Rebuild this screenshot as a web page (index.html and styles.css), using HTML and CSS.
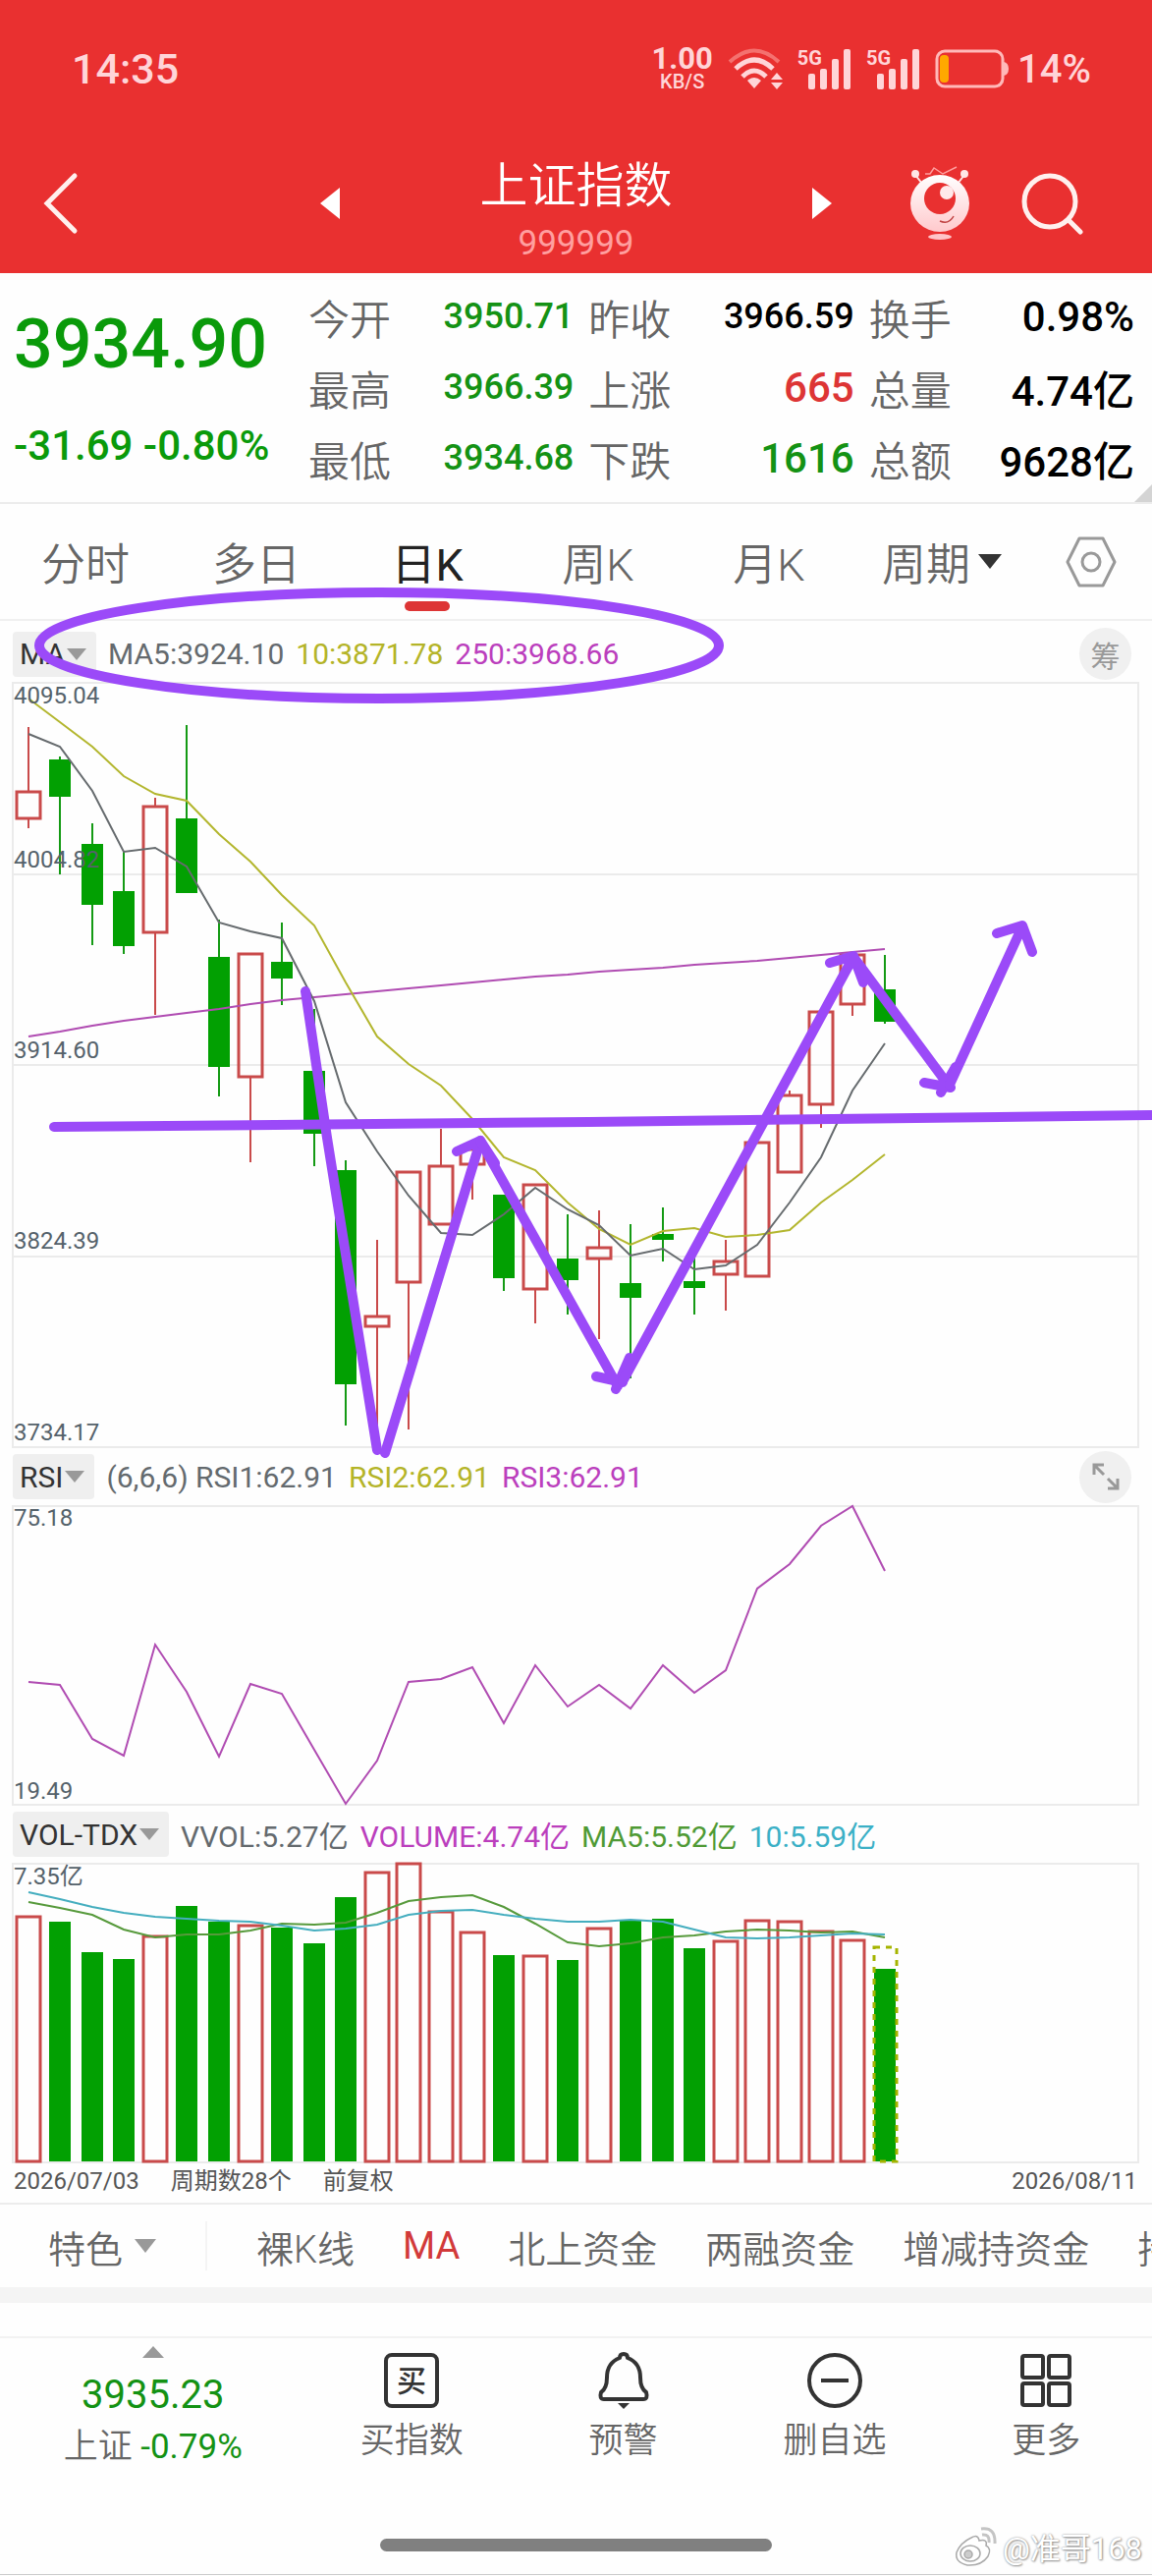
FILE: index.html
```
<!DOCTYPE html>
<html lang="zh-CN">
<head>
    <meta charset="UTF-8">
    <meta name="viewport" content="width=device-width, initial-scale=1.0">
    <title>上证指数 999999</title>
    <link rel="stylesheet" href="styles.css">
</head>
<body>

    <!-- Header -->
    <header class="header">
        <div class="status-bar">
            <span class="clock">14:35</span>
            <div class="status-icons">
                <div class="net-speed"><b>1.00</b><span>KB/S</span></div>
                <svg class="wifi" width="56" height="42" viewBox="0 0 56 42" fill="none" stroke="#ffd5d8" stroke-width="5">
                    <path d="M2 14 Q27 -9 52 14" stroke="#f4716f" stroke-width="4"/>
                    <path d="M8 21 Q27 3 46 21"/>
                    <path d="M15 29 Q27 17 39 29"/>
                    <path d="M20 33 Q27 27 34 33 L27 41 Z" fill="#ffd5d8" stroke="none"/>
                    <path d="M44 32 l6 -7 l6 7 Z M44 35 l6 7 l6 -7 Z" fill="#ffd5d8" stroke="none"/>
                </svg>
                <div class="signal">
                    <span>5G</span>
                    <svg width="44" height="42" viewBox="0 0 44 42" fill="#ffd5d8"><rect x="0" y="26" width="7" height="16" rx="2"/><rect x="12" y="21" width="7" height="21" rx="2"/><rect x="24" y="11" width="7" height="31" rx="2"/><rect x="36" y="1" width="7" height="41" rx="2"/></svg>
                </div>
                <div class="signal">
                    <span>5G</span>
                    <svg width="44" height="42" viewBox="0 0 44 42" fill="#ffd5d8"><rect x="0" y="26" width="7" height="16" rx="2"/><rect x="12" y="21" width="7" height="21" rx="2"/><rect x="24" y="11" width="7" height="31" rx="2"/><rect x="36" y="1" width="7" height="41" rx="2"/></svg>
                </div>
                <svg class="battery" width="75" height="40" viewBox="0 0 75 40">
                    <rect x="2" y="2" width="67" height="36" rx="8" fill="none" stroke="#ffb9b9" stroke-width="3"/>
                    <path d="M70 13 q5 1 5 7 q0 6 -5 7 Z" fill="#ffb9b9"/>
                    <rect x="5" y="6" width="9" height="28" rx="4" fill="#ffa800"/>
                </svg>
                <span class="battery-level">14%</span>
            </div>
        </div>

        <nav class="title-bar">
            <button class="icon-btn back" aria-label="返回">
                <svg width="36" height="64" viewBox="0 0 36 64" fill="none" stroke="#fff0ee" stroke-width="5" stroke-linecap="round"><path d="M32 4 L4 32 L32 60"/></svg>
            </button>
            <div class="symbol">
                <button class="icon-btn" aria-label="上一只"><svg width="20" height="32" viewBox="0 0 20 32"><path d="M0 16 L20 0 V32 Z" fill="#fff"/></svg></button>
                <div class="symbol-name">
                    <h1>上证指数</h1>
                    <p>999999</p>
                </div>
                <button class="icon-btn" aria-label="下一只"><svg width="20" height="32" viewBox="0 0 20 32"><path d="M20 16 L0 0 V32 Z" fill="#fff"/></svg></button>
            </div>
            <div class="title-actions">
                <button class="icon-btn" aria-label="助手">
                    <svg width="60" height="76" viewBox="0 0 60 76">
                        <defs><linearGradient id="bot" x1="0" y1="0" x2="0" y2="1"><stop offset="0" stop-color="#fff"/><stop offset="1" stop-color="#ffc9cc"/></linearGradient></defs>
                        <path d="M12 18 L5 9 M48 18 L55 9" stroke="#ffe6e6" stroke-width="2"/>
                        <circle cx="5" cy="8" r="4" fill="#ffe6e6"/><circle cx="55" cy="8" r="4" fill="#ffe6e6"/>
                        <path d="M15 8 h5 l4 -6 l9 6 l14 -7" fill="none" stroke="#ff9d9d" stroke-width="1.5"/>
                        <ellipse cx="30" cy="38" rx="30" ry="29" fill="url(#bot)"/>
                        <circle cx="30" cy="33" r="16" fill="#e93030"/><circle cx="37" cy="27" r="7" fill="#ffe9ea"/>
                        <path d="M30 56 Q39 60 44 51" fill="none" stroke="#c04040" stroke-width="1.5"/>
                        <ellipse cx="30" cy="72" rx="12" ry="3" fill="#ffc4c8"/>
                    </svg>
                </button>
                <button class="icon-btn" aria-label="搜索">
                    <svg width="64" height="64" viewBox="0 0 64 64" fill="none" stroke="#fff0ee" stroke-width="5" stroke-linecap="round"><circle cx="29" cy="30" r="26"/><path d="M48 49 L60 61"/></svg>
                </button>
            </div>
        </nav>
    </header>

    <!-- Quote -->
    <section class="quote">
        <div class="quote-main">
            <p class="price">3934.90</p>
            <p class="change">-31.69 -0.80%</p>
        </div>
        <dl class="quote-grid">
            <div><dt>今开</dt><dd class="down">3950.71</dd></div>
            <div><dt>昨收</dt><dd>3966.59</dd></div>
            <div><dt>换手</dt><dd class="big">0.98%</dd></div>
            <div><dt>最高</dt><dd class="down">3966.39</dd></div>
            <div><dt>上涨</dt><dd class="big up">665</dd></div>
            <div><dt>总量</dt><dd class="big">4.74亿</dd></div>
            <div><dt>最低</dt><dd class="down">3934.68</dd></div>
            <div><dt>下跌</dt><dd class="big down">1616</dd></div>
            <div><dt>总额</dt><dd class="big">9628亿</dd></div>
        </dl>
    </section>

    <!-- Charts -->
    <main class="board">
        <nav class="period-tabs">
            <button>分时</button>
            <button>多日</button>
            <button class="active">日K</button>
            <button>周K</button>
            <button>月K</button>
            <button>周期<svg class="caret" width="24" height="15" viewBox="0 0 24 15"><path d="M0 0 H24 L12 15 Z" fill="#333"/></svg></button>
            <button aria-label="设置"><svg width="52" height="54" viewBox="0 0 52 54" fill="none" stroke="#999" stroke-width="3" stroke-linejoin="round"><path d="M14 3 H38 L50 27 L38 51 H14 L2 27 Z"/><circle cx="26" cy="27" r="9"/></svg></button>
        </nav>

        <div class="indicator-head first">
            <button class="tag">MA<svg width="20" height="12" viewBox="0 0 20 12"><path d="M0 0 H20 L10 12 Z" fill="#999"/></svg></button>
            <span class="c-gray">MA5:3924.10</span><span class="c-yellow">10:3871.78</span><span class="c-purple">250:3968.66</span>
            <button class="round">筹</button>
        </div>
        <svg class="chart" id="price" viewBox="0 695 1173 779"></svg>

        <div class="indicator-head">
            <button class="tag">RSI<svg width="20" height="12" viewBox="0 0 20 12"><path d="M0 0 H20 L10 12 Z" fill="#999"/></svg></button>
            <span class="c-gray">(6,6,6) RSI1:62.91</span><span class="c-yellow">RSI2:62.91</span><span class="c-purple">RSI3:62.91</span>
            <button class="round" aria-label="全屏"><svg width="28" height="28" viewBox="0 0 28 28" fill="none" stroke="#999" stroke-width="3"><path d="M2 12 V2 H12 M2 2 L12 12 M26 16 V26 H16 M26 26 L16 16"/></svg></button>
        </div>
        <svg class="chart" id="rsi" viewBox="0 1532 1173 306"></svg>

        <div class="indicator-head">
            <button class="tag">VOL-TDX<svg width="20" height="12" viewBox="0 0 20 12"><path d="M0 0 H20 L10 12 Z" fill="#999"/></svg></button>
            <span class="c-gray">VVOL:5.27亿</span><span class="c-purple">VOLUME:4.74亿</span><span class="c-green">MA5:5.52亿</span><span class="c-cyan">10:5.59亿</span>
        </div>
        <svg class="chart" id="vol" viewBox="0 1896 1173 306"></svg>

        <div class="chart-foot">
            <span>2026/07/03</span><span>周期数28个</span><span>前复权</span>
            <span class="end">2026/08/11</span>
        </div>

        <!-- Hand-drawn marks -->
        <svg class="marks" viewBox="0 512 1173 1000">
            <ellipse cx="386" cy="656" rx="346" ry="54"/>
            <path d="M55 1146 L600 1141 L1180 1134"/>
            <path d="M311 1008 L333 1157 L384 1475"/>
            <path d="M392 1478 L489 1161 M465 1171 L489 1160 L504 1183"/>
            <path d="M489 1160 L629 1410 M607 1400 L634 1406 M627 1413 L641 1381"/>
            <path d="M634 1405 L869 973 M845 979 L869 972 L879 999"/>
            <path d="M869 973 L966 1104 M941 1101 L968 1106 M958 1111 L973 1085"/>
            <path d="M967 1103 L1041 942 M1015 949 L1041 941 L1051 968"/>
        </svg>
    </main>

    <!-- Feature strip -->
    <nav class="features">
        <button class="feature-menu">特色<svg width="22" height="14" viewBox="0 0 22 14"><path d="M0 0 H22 L11 14 Z" fill="#999"/></svg></button>
        <div class="feature-list">
            <button>裸K线</button>
            <button class="active">MA</button>
            <button>北上资金</button>
            <button>两融资金</button>
            <button>增减持资金</button>
            <button>持股</button>
        </div>
    </nav>

    <!-- Bottom bar -->
    <footer class="bottom-bar">
        <button class="index-quote">
            <svg width="22" height="12" viewBox="0 0 22 12"><path d="M0 12 H22 L11 0 Z" fill="#999"/></svg>
            <span class="index-price">3935.23</span>
            <span>上证 <em>-0.79%</em></span>
        </button>
        <button>
            <svg width="58" height="58" viewBox="0 0 58 58" fill="none" stroke="#333" stroke-width="4"><rect x="3" y="3" width="52" height="52" rx="6"/><text x="29" y="40" class="buy-glyph">买</text></svg>
            <span>买指数</span>
        </button>
        <button>
            <svg width="58" height="58" viewBox="0 0 58 58" fill="none" stroke="#333" stroke-width="4" stroke-linejoin="round"><path d="M29 2 Q25 2 25 6 Q12 11 12 26 Q12 37 6 41 Q4 48 9 48 H49 Q54 48 52 41 Q46 37 46 26 Q46 11 33 6 Q33 2 29 2 Z"/><path d="M23 52 H35 L29 58 Z" fill="#333" stroke="none"/></svg>
            <span>预警</span>
        </button>
        <button>
            <svg width="58" height="58" viewBox="0 0 58 58" fill="none" stroke="#333" stroke-width="4"><circle cx="29" cy="29" r="26"/><path d="M15 29 H43"/></svg>
            <span>删自选</span>
        </button>
        <button>
            <svg width="58" height="58" viewBox="0 0 58 58" fill="none" stroke="#333" stroke-width="4"><rect x="5" y="4" width="21" height="22" rx="2"/><rect x="32" y="4" width="21" height="22" rx="2"/><rect x="5" y="32" width="21" height="22" rx="2"/><rect x="32" y="32" width="21" height="22" rx="2"/></svg>
            <span>更多</span>
        </button>
    </footer>
    <div class="home-area">
        <div class="home-indicator"></div>
        <div class="watermark">
            <svg width="44" height="44" viewBox="0 0 44 44" fill="#fff" stroke="#aaa" stroke-width="1.5">
                <path d="M18 13 Q25 9 26 16 Q35 14 33 21 Q39 24 35 32 Q28 42 14 41 Q1 38 3 28 Q7 18 18 13 Z"/>
                <ellipse cx="17" cy="29" rx="10" ry="8"/><circle cx="15" cy="30" r="4" fill="#ccc"/>
                <path d="M29 10 Q37 9 36 18 M28 4 Q43 2 42 19" fill="none" stroke-width="3" stroke="#c4c4c4"/>
            </svg>
            <span>@准哥168</span>
        </div>
    </div>

    <script src="chart.js"></script>
</body>
</html>
```
FILE: styles.css
```
/* General Styles */
* {
    margin: 0;
    padding: 0;
    box-sizing: border-box;
}
body {
    background: #fefefe;
    color: #666;
    font-family: Roboto, "Noto Sans CJK SC", sans-serif;
}
button {
    border: none;
    background: none;
    color: inherit;
    font: inherit;
    white-space: nowrap;
    cursor: pointer;
}
svg {
    display: block;
    flex-shrink: 0;
}

/* Header */
.header {
    background: #e93030;
    color: #ffd5d8;
    height: 278px;
}
.status-bar {
    height: 140px;
    padding: 0 62px 0 73px;
    display: flex;
    align-items: center;
    justify-content: space-between;
}
.clock {
    font-size: 43px;
    font-weight: 500;
}
.status-icons {
    display: flex;
    align-items: center;
    gap: 15px;
}
.net-speed {
    display: flex;
    flex-direction: column;
    align-items: center;
    font-size: 20px;
    font-weight: 500;
    line-height: 20px;
}
.net-speed b {
    font-size: 31px;
    font-weight: 700;
    line-height: 26px;
}
.signal {
    display: flex;
    align-items: flex-start;
    font-size: 20px;
    font-weight: 700;
    line-height: 20px;
}
.signal svg {
    margin-left: -14px;
}
.battery-level {
    font-size: 40px;
    font-weight: 500;
}
.battery {
    margin-right: -6px;
}
.title-bar {
    display: grid;
    grid-template-columns: 326px 1fr 326px;
    height: 130px;
    align-items: center;
}
.icon-btn {
    display: flex;
}
.back {
    margin-left: 44px;
}
.symbol {
    display: flex;
    align-items: center;
    justify-content: space-between;
}
.symbol-name {
    padding-top: 18px;
    text-align: center;
}
.symbol-name h1 {
    color: #fff;
    font-size: 49px;
    font-weight: 350;
    line-height: 64px;
}
.symbol-name p {
    color: #ff9f9f;
    font-size: 35px;
    line-height: 52px;
}
.title-actions {
    display: flex;
    align-items: center;
    justify-content: flex-end;
    gap: 53px;
    padding-right: 69px;
}

/* Quote */
.quote {
    position: relative;
    display: grid;
    grid-template-columns: 300px 1fr;
    height: 235px;
    padding: 8px 18px 8px 14px;
    border-bottom: 2px solid #ececec;
}
.quote::after {
    content: "";
    position: absolute;
    right: 0;
    bottom: 0;
    border: 9px solid transparent;
    border-right-color: #d4d4d4;
    border-bottom-color: #d4d4d4;
}
.quote-main {
    color: #0a9a0a;
    white-space: nowrap;
}
.price {
    font-size: 70px;
    font-weight: 500;
    line-height: 128px;
}
.change {
    font-size: 42px;
    font-weight: 500;
    line-height: 80px;
}
.quote-grid {
    display: grid;
    grid-template-columns: repeat(3, 1fr);
    column-gap: 15px;
    grid-auto-rows: 72px;
}
.quote-grid div {
    display: flex;
    align-items: center;
    justify-content: space-between;
}
.quote-grid dt {
    font-size: 42px;
    font-weight: 350;
}
.quote-grid dd {
    color: #000;
    font-size: 36px;
    font-weight: 500;
}
.quote-grid dd.big {
    font-size: 42px;
}
.quote-grid .up {
    color: #dd3535;
}
.quote-grid .down {
    color: #149214;
}

/* Period tabs */
.board {
    position: relative;
}
.period-tabs {
    display: grid;
    grid-template-columns: repeat(5, 174fr) 178fr 125fr;
    height: 119px;
    border-bottom: 2px solid #f0f0f0;
    font-size: 45px;
    font-weight: 350;
}
.period-tabs button {
    position: relative;
    display: flex;
    align-items: center;
    justify-content: center;
}
.period-tabs .active {
    color: #222;
    font-weight: 400;
}
.period-tabs .active::after {
    content: "";
    position: absolute;
    bottom: 8px;
    width: 46px;
    height: 10px;
    border-radius: 5px;
    background: #dd3535;
}
.caret {
    margin-left: 8px;
}

/* Indicator rows */
.indicator-head {
    display: flex;
    align-items: center;
    gap: 12px;
    height: 58px;
    padding: 0 21px 0 13px;
    font-size: 30px;
    white-space: nowrap;
}
.indicator-head.first {
    height: 63px;
    padding-top: 4px;
}
.tag {
    display: flex;
    align-items: center;
    gap: 2px;
    height: 46px;
    padding: 0 10px 0 7px;
    border-radius: 4px;
    background: #efefef;
    color: #333;
}
.round {
    display: flex;
    align-items: center;
    justify-content: center;
    width: 53px;
    height: 53px;
    margin-left: auto;
    border-radius: 50%;
    background: #f0f0f0;
    color: #999;
}
.c-gray { color: #646a6e; }
.c-yellow { color: #b4b428; }
.c-purple { color: #bb3fbd; }
.c-green { color: #4f9a35; }
.c-cyan { color: #3bb0c6; }

/* Charts */
.chart {
    width: 100%;
    height: auto;
    overflow: visible;
}
.chart line, .chart rect, .chart polyline {
    fill: none;
    stroke-width: 2;
}
.chart .frame {
    stroke: #ebebeb;
}
.chart text {
    fill: #55626b;
    font-size: 24px;
}
.chart .up {
    stroke: #c94a4a;
    stroke-width: 3;
}
.chart .down {
    stroke: #149a14;
}
.chart rect.down {
    fill: #02a002;
    stroke: none;
}
.chart line.up {
    stroke-width: 2;
}
.chart .forecast {
    stroke: #a5b400;
    stroke-width: 3;
    stroke-dasharray: 6 6;
}
.chart .ma5 { stroke: #666b6e; }
.chart .ma10 { stroke: #b3b62e; }
.chart .ma250, .chart .rsi { stroke: #b04cb2; }
.chart .vma5 { stroke: #579a3c; }
.chart .vma10 { stroke: #45aebf; }
.chart-foot {
    display: flex;
    gap: 32px;
    height: 42px;
    padding: 0 15px 0 14px;
    border-bottom: 2px solid #ececec;
    font-size: 24px;
    line-height: 36px;
    color: #555;
}
.chart-foot .end {
    margin-left: auto;
}
.marks {
    position: absolute;
    top: 0;
    left: 0;
    width: 100%;
    overflow: hidden;
    pointer-events: none;
    fill: none;
    stroke: #9b4af8;
    stroke-width: 10;
    stroke-linecap: round;
    stroke-linejoin: round;
}

/* Feature strip */
.features {
    display: flex;
    align-items: center;
    height: 100px;
    border-bottom: 16px solid #f4f4f4;
    font-size: 38px;
    font-weight: 350;
}
.feature-menu {
    display: flex;
    align-items: center;
    gap: 12px;
    height: 50px;
    padding: 0 50px 0 49px;
    border-right: 2px solid #f4f4f4;
}
.feature-list {
    flex: 1;
    display: flex;
    gap: 49px;
    padding-left: 50px;
    overflow: hidden;
}
.features .active {
    color: #d23a3a;
    font-weight: 400;
}

/* Bottom bar */
.bottom-bar {
    display: grid;
    grid-template-columns: 311fr repeat(4, 215fr);
    margin-top: 34px;
    height: 150px;
    border-top: 2px solid #f2f2f2;
    font-size: 35px;
    font-weight: 350;
}
.bottom-bar button {
    display: flex;
    flex-direction: column;
    align-items: center;
    gap: 8px;
    padding-top: 14px;
    line-height: 50px;
}
.bottom-bar .index-quote {
    gap: 0;
    padding-top: 8px;
}
.index-price {
    margin-top: 10px;
    font-size: 40px;
    line-height: 56px;
}
.index-price, .index-quote em {
    color: #149214;
    font-style: normal;
    font-weight: 400;
}
.buy-glyph {
    fill: #333;
    stroke: none;
    font-size: 30px;
    font-weight: 500;
    text-anchor: middle;
}
.home-area {
    position: relative;
    height: 93px;
    padding-top: 56px;
    border-bottom: 1px solid #ccc;
}
.home-indicator {
    width: 34%;
    height: 13px;
    margin: 0 auto;
    border-radius: 7px;
    background: #808080;
}
.watermark {
    position: absolute;
    right: 10px;
    bottom: 6px;
    display: flex;
    align-items: center;
    gap: 6px;
    color: #fff;
    font-size: 31px;
    text-shadow: 0 0 2px #888, 1px 1px 2px #999;
}
```
FILE: chart.js
```
const FIRST_X = 29;
const STEP = 32.28;
const BASE = 2200;

// [direction, high, body top, body bottom, low]
const candles = [
    ['up', 740, 806, 833, 843], ['down', 770, 773, 811, 890], ['down', 838, 859, 921, 962], ['down', 866, 907, 963, 971],
    ['up', 812, 821, 949, 1033], ['down', 738, 833, 909, 909], ['down', 936, 974, 1086, 1116], ['up', 971, 971, 1096, 1183],
    ['down', 939, 979, 996, 1023], ['down', 1027, 1090, 1154, 1187], ['down', 1181, 1191, 1409, 1451], ['up', 1262, 1340, 1350, 1472],
    ['up', 1193, 1193, 1305, 1455], ['up', 1149, 1187, 1246, 1246], ['up', 1168, 1170, 1185, 1221], ['down', 1216, 1216, 1301, 1314],
    ['up', 1206, 1206, 1312, 1347], ['down', 1236, 1281, 1303, 1338], ['up', 1232, 1270, 1281, 1363], ['down', 1246, 1306, 1321, 1403],
    ['down', 1229, 1256, 1262, 1284], ['down', 1277, 1304, 1311, 1338], ['up', 1262, 1284, 1297, 1334], ['up', 1163, 1163, 1299, 1299],
    ['up', 1110, 1115, 1193, 1193], ['up', 1029, 1030, 1124, 1148], ['up', 972, 972, 1022, 1034], ['down', 972, 1007, 1040, 1042]
];
const ma5 = [747, 760, 805, 867, 863, 882, 939, 948, 955, 1019, 1122, 1172, 1217, 1255, 1257, 1236, 1209, 1231, 1247, 1278, 1271, 1292, 1288, 1267, 1224, 1178, 1110, 1062];
const ma10 = [711, 735, 760, 790, 808, 815, 849, 877, 911, 942, 1000, 1055, 1083, 1105, 1139, 1178, 1191, 1224, 1251, 1267, 1253, 1250, 1259, 1257, 1252, 1224, 1201, 1175];
const ma250 = [1055, 1050, 1044, 1039, 1035, 1031, 1027, 1022, 1018, 1015, 1012, 1009, 1006, 1003, 1000, 997, 994, 992, 989, 987, 985, 982, 980, 978, 975, 972, 969, 966];
const rsi = [1712, 1715, 1770, 1787, 1674, 1722, 1788, 1714, 1724, 1781, 1836, 1792, 1712, 1709, 1697, 1754, 1695, 1737, 1715, 1739, 1695, 1723, 1700, 1617, 1592, 1553, 1533, 1599];
const volume = [1951, 1956, 1987, 1994, 1971, 1940, 1956, 1960, 1962, 1978, 1931, 1906, 1897, 1946, 1967, 1990, 1991, 1995, 1963, 1954, 1953, 1983, 1976, 1955, 1956, 1966, 1975, 2004];
const vma5 = [1936, 1942, 1949, 1964, 1972, 1969, 1969, 1965, 1958, 1959, 1957, 1947, 1935, 1931, 1929, 1941, 1958, 1977, 1981, 1978, 1972, 1970, 1966, 1964, 1965, 1967, 1966, 1972];
const vma10 = [1926, 1933, 1941, 1947, 1951, 1953, 1955, 1956, 1960, 1965, 1963, 1959, 1949, 1945, 1944, 1949, 1953, 1956, 1956, 1954, 1956, 1964, 1972, 1973, 1972, 1970, 1968, 1969];

function add(svg, tag, attrs, text) {
    const el = document.createElementNS('http://www.w3.org/2000/svg', tag);
    for (const key in attrs) el.setAttribute(key, attrs[key]);
    if (text) el.textContent = text;
    svg.appendChild(el);
}
function x(i) {
    return Math.round(FIRST_X + i * STEP);
}
function line(svg, values, cls) {
    add(svg, 'polyline', { class: cls, points: values.map((y, i) => x(i) + ',' + y).join(' ') });
}
function body(svg, i, dir, top, bottom) {
    const half = dir === 'up' ? 12 : 11;
    add(svg, 'rect', { class: dir, x: x(i) - half, y: top, width: half * 2, height: bottom - top });
}
function frame(svg, top, bottom) {
    add(svg, 'rect', { class: 'frame', x: 13, y: top, width: 1146, height: bottom - top });
}

// Price
const price = document.getElementById('price');
frame(price, 695, 1473);
[890, 1084, 1279].forEach(y => add(price, 'line', { class: 'frame', x1: 13, x2: 1159, y1: y, y2: y }));
candles.forEach(([dir, high, top, bottom, low], i) => {
    add(price, 'line', { class: dir, x1: x(i), x2: x(i), y1: high, y2: top });
    add(price, 'line', { class: dir, x1: x(i), x2: x(i), y1: bottom, y2: low });
    body(price, i, dir, top, bottom);
});
line(price, ma250, 'ma250');
line(price, ma10, 'ma10');
line(price, ma5, 'ma5');
[[716, '4095.04'], [883, '4004.82'], [1077, '3914.60'], [1271, '3824.39'], [1466, '3734.17']]
    .forEach(([y, label]) => add(price, 'text', { x: 14, y: y }, label));

// RSI
const rsiChart = document.getElementById('rsi');
frame(rsiChart, 1533, 1837);
line(rsiChart, rsi, 'rsi');
add(rsiChart, 'text', { x: 14, y: 1553 }, '75.18');
add(rsiChart, 'text', { x: 14, y: 1831 }, '19.49');

// Volume
const vol = document.getElementById('vol');
frame(vol, 1897, 2201);
volume.forEach((top, i) => body(vol, i, candles[i][0], top, BASE));
add(vol, 'rect', { class: 'forecast', x: x(27) - 11, y: 1982, width: 23, height: 218 });
line(vol, vma5, 'vma5');
line(vol, vma10, 'vma10');
add(vol, 'text', { x: 14, y: 1918 }, '7.35亿');
```
